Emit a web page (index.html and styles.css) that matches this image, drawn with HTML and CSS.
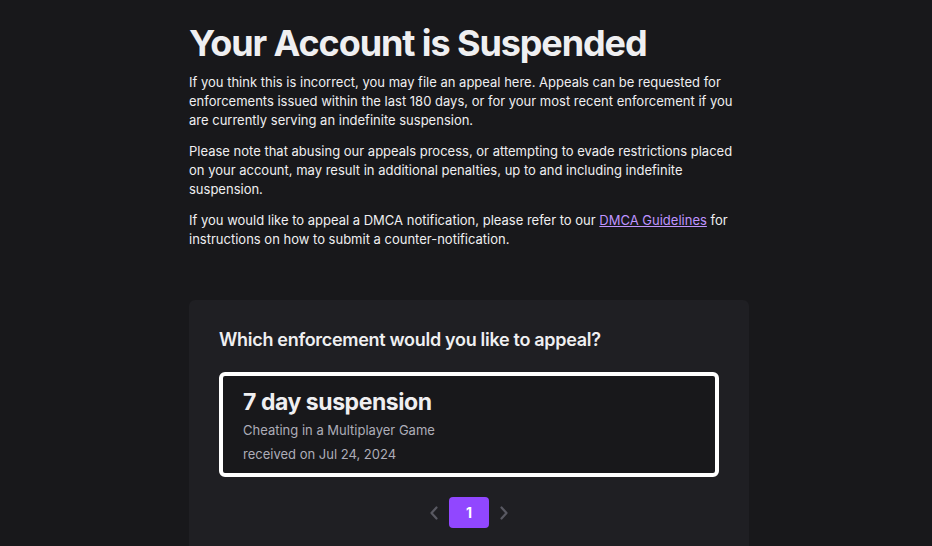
FILE: index.html
```html
<!DOCTYPE html>
<html lang="en">
<head>
<meta charset="utf-8">
<title>Your Account is Suspended</title>
<link rel="stylesheet" href="styles.css">
</head>
<body>
<main class="page">
  <h1 class="title">Your Account is Suspended</h1>
  <p class="text">If you think this is incorrect, you may file an appeal here. Appeals can be requested for enforcements issued within the last 180 days, or for your most recent enforcement if you are currently serving an indefinite suspension.</p>
  <p class="text">Please note that abusing our appeals process, or attempting to evade restrictions placed on your account, may result in additional penalties, up to and including indefinite suspension.</p>
  <p class="text">If you would like to appeal a DMCA notification, please refer to our <a class="link" href="#">DMCA Guidelines</a> for instructions on how to submit a counter-notification.</p>

  <section class="card">
    <h2 class="card-title">Which enforcement would you like to appeal?</h2>
    <div class="enforcement">
      <div class="enf-title">7 day suspension</div>
      <div class="enf-meta">Cheating in a Multiplayer Game</div>
      <div class="enf-meta">received on Jul 24, 2024</div>
    </div>
    <nav class="pager">
      <button class="pager-arrow" aria-label="Previous">
        <svg width="10" height="14" viewBox="0 0 10 14"><path d="M7.5 1.5 L2.5 7 L7.5 12.5" fill="none" stroke="currentColor" stroke-width="2.2" stroke-linecap="round" stroke-linejoin="round"/></svg>
      </button>
      <button class="pager-page">1</button>
      <button class="pager-arrow" aria-label="Next">
        <svg width="10" height="14" viewBox="0 0 10 14"><path d="M2.5 1.5 L7.5 7 L2.5 12.5" fill="none" stroke="currentColor" stroke-width="2.2" stroke-linecap="round" stroke-linejoin="round"/></svg>
      </button>
    </nav>
  </section>
</main>
</body>
</html>
```
FILE: styles.css
```css
html, body {
  margin: 0;
  padding: 0;
  background: #18181b;
  color: #efeff1;
  font-family: Inter, "Noto Sans", "Liberation Sans", sans-serif;
  overflow: hidden;
}
.page {
  width: 560px;
  margin: 0 0 0 189px;
  padding-top: 21px;
}
.title {
  margin: 0 0 8px 0;
  font-size: 36px;
  line-height: 44px;
  font-weight: 700;
  letter-spacing: -1.1px;
  color: #efeff1;
}
.text {
  margin: 0 0 12px 0;
  font-size: 13px;
  line-height: 19px;
}
.link {
  color: #bf94ff;
  text-decoration: underline;
}
.card {
  margin-top: 51px;
  background: #1f1f23;
  border-radius: 6px;
  padding: 28px 30px 40px 30px;
}
.card-title {
  margin: 0 0 20px 0;
  font-size: 18px;
  line-height: 24px;
  font-weight: 600;
  letter-spacing: -0.3px;
}
.enforcement {
  border: 4px solid #ffffff;
  border-radius: 6px;
  background: #18181b;
  padding: 12px 20px 7px 20px;
}
.enf-title {
  font-size: 23px;
  line-height: 28px;
  font-weight: 700;
  letter-spacing: -0.45px;
  margin-bottom: 2px;
}
.enf-meta {
  font-size: 13px;
  line-height: 24px;
  color: #adadb8;
}
.pager {
  display: flex;
  justify-content: center;
  margin-top: 20px;
}
.pager-arrow {
  width: 30px;
  height: 31px;
  border: 0;
  background: transparent;
  color: #595962;
  display: flex;
  align-items: center;
  justify-content: center;
  padding: 0;
}
.pager-page {
  width: 40px;
  height: 31px;
  border: 0;
  border-radius: 4px;
  background: #9147ff;
  color: #ffffff;
  font-family: Inter, "Noto Sans", sans-serif;
  font-size: 14px;
  font-weight: 700;
  padding: 0;
}
```
